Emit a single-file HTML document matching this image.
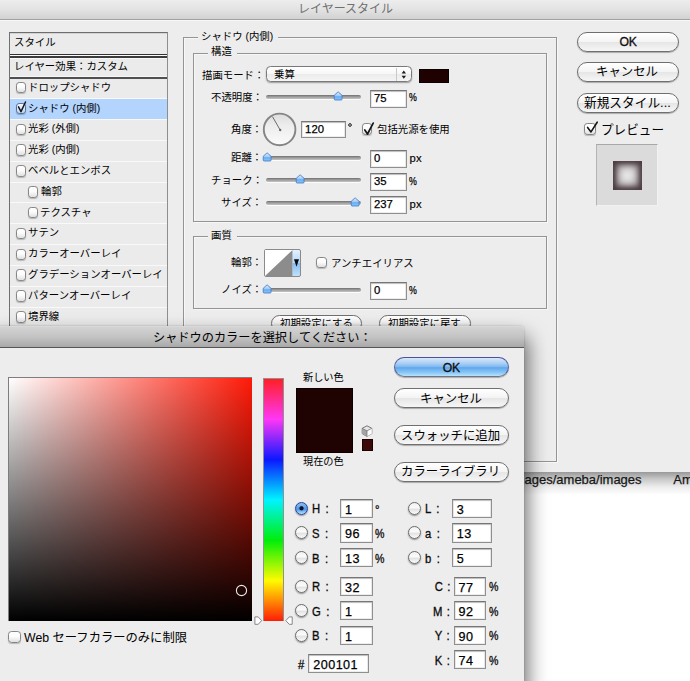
<!DOCTYPE html>
<html lang="ja">
<head>
<meta charset="utf-8">
<title>レイヤースタイル</title>
<style>
html,body{margin:0;padding:0;background:#fff}
html{overflow:hidden;width:690px;height:681px}
body{width:690px;height:681px;overflow:hidden;position:relative;font-family:"Liberation Sans",sans-serif;font-size:10.4px;color:#000;line-height:1}
.t{position:absolute;overflow:visible;pointer-events:none}
svg.t text{font-family:"Liberation Sans","Noto Sans CJK JP",sans-serif;white-space:pre}
.a{position:absolute;box-sizing:border-box}
.l{position:absolute;white-space:nowrap;line-height:1}
/* window chrome */
#ls{left:0;top:0;width:690px;height:472px;background:#ededed}
#lsbar{left:0;top:0;width:690px;height:20px;background:linear-gradient(#ededed,#e4e4e4 45%,#d2d2d2);border-bottom:1px solid #a2a2a2;box-shadow:0 1px 0 #f6f6f6}
#lsshadow{left:0;top:472px;width:690px;height:23px;background:linear-gradient(rgba(0,0,0,.40),rgba(0,0,0,.22) 30%,rgba(0,0,0,.07) 65%,rgba(0,0,0,0))}
/* list */
#list{left:9px;top:32px;width:159px;height:320px;border:1px solid #8e8e8e;border-left:1.5px solid #707070;border-top:1.6px solid #6e6e6e;background:#ebebeb;box-shadow:inset 0 1px 0 rgba(0,0,0,.1)}
.sep{position:absolute;left:10px;width:157px;height:1px;background:#f9f9f9}
.dk{position:absolute;left:10px;width:157px;height:1px;background:#555}
.sel{position:absolute;left:10px;width:157px;background:#b3d4fd}
.cb{position:absolute;box-sizing:border-box;width:9.8px;height:11.4px;margin-top:-.6px;border:1.35px solid #858585;border-radius:3.2px;background:linear-gradient(#fff,#fcfcfc 45%,#e0e0e0);box-shadow:0 1px 1px rgba(0,0,0,.22)}
.cb.on{background:linear-gradient(#f4f9ff,#d9e9fb 50%,#b6d6f7);border-color:#5a6f94}
/* group boxes */
.gb{position:absolute;box-sizing:border-box;border:1px solid #949494;box-shadow:inset 1px 1px 0 rgba(255,255,255,.55),1px 1px 0 rgba(255,255,255,.55)}
.mask{position:absolute;background:#ededed;height:3px}
/* inputs */
.in{position:absolute;box-sizing:border-box;width:37.4px;height:17.7px;line-height:15.9px;background:#fff;border:1px solid #8f8f8f;border-top-color:#767676;box-shadow:inset 0 1px 1px rgba(0,0,0,.2),inset 0 0 0 1px rgba(0,0,0,.07);font-size:11.3px;padding:0 0 0 3.3px;white-space:nowrap}
.in span{display:block;-webkit-text-stroke:.25px #000}
.in.big{font-size:12.6px;letter-spacing:.45px;padding-left:3.9px;height:19.4px;line-height:20.4px}
.pc{display:inline-block;transform:scaleX(.8);transform-origin:left;-webkit-text-stroke:.25px #000}
.lb{-webkit-text-stroke:.15px #000}
/* sliders */
.trk{position:absolute;height:4px;border-radius:2px;background:linear-gradient(#6f6f6f,#9c9c9c 45%,#c4c4c4);box-shadow:0 1px 0 rgba(255,255,255,.8)}
.th{position:absolute;width:10.3px;height:10.3px;overflow:visible;margin-left:.35px;margin-top:.9px}
/* pill buttons */
.btn{position:absolute;box-sizing:border-box;border:1px solid #6f6f6f;border-radius:10px;background:linear-gradient(#ffffff,#f4f4f4 48%,#e6e6e6 52%,#f6f6f6);box-shadow:0 1px 1px rgba(0,0,0,.28)}
.btn.blue{border-color:#4c4f9c #55629f #6f7486;background:linear-gradient(#d9e8f9,#a9cff5 30%,#82baf1 48%,#5fa7ec 54%,#8cc8f6 82%,#b8e4fc)}
.btn .l{left:0;right:0;text-align:center}
.ok{font-size:12.2px;color:#111;-webkit-text-stroke:.35px #111;letter-spacing:-.3px}
.rd{position:absolute;box-sizing:border-box;width:13.2px;height:13.2px;border-radius:7px;border:1.2px solid #6a6a6a;background:linear-gradient(#f2f2f2,#fbfbfb 45%,#e2e2e2 55%,#fafafa);box-shadow:0 1px 1.5px rgba(0,0,0,.4)}
.rd.on{border-color:#24449a;background:radial-gradient(circle at 50% 48%,#0a1530 0,#0a1530 1.6px,rgba(10,21,48,0) 2.6px),linear-gradient(#8fbdf0,#5e9fe8 45%,#4a93e6 55%,#b4e4fd)}
.lb2{font-size:12.5px;margin-top:1.1px;color:#0b0b0b;-webkit-text-stroke:.32px #0b0b0b;transform:scaleX(.9);transform-origin:left}
.lb2.r{transform-origin:right}
.ws{word-spacing:2.6px}
.pc2{display:inline-block;transform:scaleX(.94);transform-origin:left}
</style>
</head>
<body>
<!-- page behind the dialogs -->
<div class="l" style="left:510.8px;top:473px;font-size:13px;color:#1c1c1c;-webkit-text-stroke:.25px #1c1c1c">images/ameba/images</div>
<div class="l" style="left:673.3px;top:473px;font-size:13px;color:#1c1c1c;-webkit-text-stroke:.25px #1c1c1c;width:16.7px;height:16px;overflow:hidden">Ameba</div>
<div class="a" id="lsshadow"></div>

<!-- ===================== Layer Style dialog ===================== -->
<div class="a" id="ls"></div>
<div class="a" id="lsbar"></div>
<svg class="t" style="left:297.80px;top:2.42px" width="98.0" height="15.6"><text x="0" y="11.40" font-size="12" fill="#707070">レイヤースタイル</text></svg>

<!-- style list -->
<div class="a" id="list"></div>
<div class="dk" style="top:53.8px;height:1.2px;background:#333"></div>
<div class="sep" style="top:55px;height:1px;background:#fbfbfb"></div>
<div class="dk" style="top:56px;height:1.6px;background:#3c3c3c"></div>
<div class="sep" style="top:57.6px;height:1px;background:#f8f8f8"></div>
<div class="sep" style="top:76.3px;height:1px;background:#f6f6f6"></div>
<div class="dk" style="top:77.3px;height:1.5px;background:#505050"></div>
<div class="sel" style="top:99px;height:20px"></div>
<div class="sep" style="top:98px"></div>
<div class="sep" style="top:119px"></div>
<div class="sep" style="top:140px"></div>
<div class="sep" style="top:161px"></div>
<div class="sep" style="top:182px"></div>
<div class="sep" style="top:202px"></div>
<div class="sep" style="top:223px"></div>
<div class="sep" style="top:244px"></div>
<div class="sep" style="top:265px"></div>
<div class="sep" style="top:286px"></div>
<div class="sep" style="top:307px"></div>
<svg class="t" style="left:13.70px;top:36.46px" width="43.6" height="13.5"><text x="0" y="9.88" font-size="10.4" fill="#000">スタイル</text></svg>
<svg class="t" style="left:13.70px;top:60.06px" width="115.4" height="13.5"><text x="0" y="9.88" font-size="10.4" fill="#000">レイヤー効果：カスタム</text></svg>
<div class="cb" style="left:15.8px;top:82.5px"></div>
<svg class="t" style="left:27.70px;top:80.86px" width="85.2" height="13.5"><text x="0" y="9.88" font-size="10.4" fill="#000">ドロップシャドウ</text></svg>
<div class="cb on" style="left:15.8px;top:103.2px"></div>
<svg class="t" style="left:16px;top:98px" width="14" height="18"><path d="M2.5 8.9 L5 13.6 L9.5 4" fill="none" stroke="#151515" stroke-width="1.5" stroke-linecap="round" stroke-linejoin="round"/></svg>
<svg class="t" style="left:27.70px;top:101.86px" width="74.4" height="13.5"><text x="0" y="9.88" font-size="10.4" fill="#000">シャドウ (内側)</text></svg>
<div class="cb" style="left:15.8px;top:124.5px"></div>
<svg class="t" style="left:27.70px;top:122.46px" width="53.6" height="13.5"><text x="0" y="9.88" font-size="10.4" fill="#000">光彩 (外側)</text></svg>
<div class="cb" style="left:15.8px;top:145px"></div>
<svg class="t" style="left:27.70px;top:143.26px" width="53.6" height="13.5"><text x="0" y="9.88" font-size="10.4" fill="#000">光彩 (内側)</text></svg>
<div class="cb" style="left:15.8px;top:166px"></div>
<svg class="t" style="left:27.70px;top:164.06px" width="85.2" height="13.5"><text x="0" y="9.88" font-size="10.4" fill="#000">ベベルとエンボス</text></svg>
<div class="cb" style="left:27.8px;top:187px"></div>
<svg class="t" style="left:40.60px;top:184.86px" width="22.8" height="13.5"><text x="0" y="9.88" font-size="10.4" fill="#000">輪郭</text></svg>
<div class="cb" style="left:27.8px;top:207.5px"></div>
<svg class="t" style="left:39.80px;top:205.66px" width="54.0" height="13.5"><text x="0" y="9.88" font-size="10.4" fill="#000">テクスチャ</text></svg>
<div class="cb" style="left:15.8px;top:228.5px"></div>
<svg class="t" style="left:27.70px;top:226.46px" width="33.2" height="13.5"><text x="0" y="9.88" font-size="10.4" fill="#000">サテン</text></svg>
<div class="cb" style="left:15.8px;top:249.5px"></div>
<svg class="t" style="left:27.70px;top:247.26px" width="95.6" height="13.5"><text x="0" y="9.88" font-size="10.4" fill="#000">カラーオーバーレイ</text></svg>
<div class="cb" style="left:15.8px;top:270px"></div>
<svg class="t" style="left:27.70px;top:268.06px" width="137.2" height="13.5"><text x="0" y="9.88" font-size="10.4" fill="#000">グラデーションオーバーレイ</text></svg>
<div class="cb" style="left:15.8px;top:291px"></div>
<svg class="t" style="left:27.70px;top:288.86px" width="106.0" height="13.5"><text x="0" y="9.88" font-size="10.4" fill="#000">パターンオーバーレイ</text></svg>
<div class="cb" style="left:15.8px;top:312px"></div>
<svg class="t" style="left:27.70px;top:309.86px" width="33.2" height="13.5"><text x="0" y="9.88" font-size="10.4" fill="#000">境界線</text></svg>

<!-- group boxes -->
<div class="gb" style="left:183.2px;top:36.8px;width:373.8px;height:425.2px"></div>
<div class="mask" style="left:198px;top:36px;width:80px"></div>
<svg class="t" style="left:201.00px;top:29.76px" width="74.4" height="13.5"><text x="0" y="9.88" font-size="10.4" fill="#000">シャドウ (内側)</text></svg>
<div class="gb" style="left:192.8px;top:52.8px;width:354.2px;height:169.7px"></div>
<div class="mask" style="left:207.5px;top:51.8px;width:29px"></div>
<svg class="t" style="left:210.80px;top:45.36px" width="22.8" height="13.5"><text x="0" y="9.88" font-size="10.4" fill="#000">構造</text></svg>
<div class="gb" style="left:193px;top:235.5px;width:354px;height:73.5px"></div>
<div class="mask" style="left:208px;top:234.5px;width:29px"></div>
<svg class="t" style="left:210.80px;top:228.66px" width="22.8" height="13.5"><text x="0" y="9.88" font-size="10.4" fill="#000">画質</text></svg>

<!-- blend mode -->
<svg class="t" style="left:201.94px;top:68.56px" width="63.4" height="13.5"><text x="0" y="9.88" font-size="10.4" fill="#000">描画モード：</text></svg>
<div class="a" style="left:266.3px;top:66.3px;width:146px;height:16.2px;border:1px solid #7a7a7a;border-radius:4.5px;background:linear-gradient(#ffffff,#f7f7f7 48%,#ebebeb 52%,#f5f5f5);box-shadow:0 1px 1.5px rgba(0,0,0,.35)"></div>
<div class="a" style="left:396.3px;top:67.8px;width:1px;height:13.2px;background:#c9c9c9"></div>
<svg class="t" style="left:399.2px;top:68px" width="10" height="13"><path d="M2.6 5.4 L4.8 2.4 L7 5.4Z M2.6 7.8 L4.8 10.8 L7 7.8Z" fill="#1a1a1a"/></svg>
<svg class="t" style="left:274.00px;top:68.26px" width="22.8" height="13.5"><text x="0" y="9.88" font-size="10.4" fill="#000">乗算</text></svg>
<div class="a" style="left:419.2px;top:68.5px;width:29.4px;height:14px;background:#200101;border:1px solid #0a0000"></div>

<!-- opacity -->
<svg class="t" style="left:210.54px;top:91.26px" width="53.0" height="13.5"><text x="0" y="9.88" font-size="10.4" fill="#000">不透明度：</text></svg>
<div class="trk" style="left:266.3px;top:94.9px;width:95px"></div>
<svg class="th" style="left:332.3px;top:90.1px" viewBox="0 0 11 11"><use href="#thumb"/></svg>
<div class="in" style="left:369.7px;top:89.9px"><span>75</span></div>
<div class="l" style="left:408.8px;top:92.4px;font-size:11px"><span class="pc">%</span></div>

<!-- angle -->
<svg class="t" style="left:231.34px;top:122.56px" width="32.2" height="13.5"><text x="0" y="9.88" font-size="10.4" fill="#000">角度：</text></svg>
<svg class="t" style="left:261px;top:110.6px" width="38" height="38"><defs><linearGradient id="dg" x1="0" y1="0" x2="0" y2="1"><stop offset="0" stop-color="#dcdcdc"/><stop offset=".35" stop-color="#ececec"/><stop offset="1" stop-color="#fbfbfb"/></linearGradient></defs><circle cx="18.6" cy="18.4" r="15.8" fill="url(#dg)" stroke="#858585" stroke-width="1.9"/><path d="M19.2 19 L11.5 5.7" stroke="#4a4a4a" stroke-width=".8" fill="none"/><circle cx="19.2" cy="19" r="1.2" fill="#6a6a6a"/></svg>
<div class="in" style="left:300.8px;top:120.6px;width:45.4px"><span>120</span></div>
<svg class="t" style="left:346.8px;top:121.8px" width="6" height="6"><circle cx="3" cy="3" r="1.35" fill="none" stroke="#1a1a1a" stroke-width="1"/></svg>
<div class="cb" style="left:361.6px;top:123.5px;width:10px;height:11.6px"></div>
<svg class="t" style="left:361px;top:117.5px" width="15" height="18"><path d="M3.8 12 L6.5 16 L12.2 5.1" fill="none" stroke="#151515" stroke-width="1.7" stroke-linecap="round" stroke-linejoin="round"/></svg>
<svg class="t" style="left:376.80px;top:122.86px" width="74.8" height="13.5"><text x="0" y="9.88" font-size="10.4" fill="#000">包括光源を使用</text></svg>

<!-- distance -->
<svg class="t" style="left:231.34px;top:151.36px" width="32.2" height="13.5"><text x="0" y="9.88" font-size="10.4" fill="#000">距離：</text></svg>
<div class="trk" style="left:266.3px;top:155.6px;width:95px"></div>
<svg class="th" style="left:261.7px;top:150.8px" viewBox="0 0 11 11"><use href="#thumb"/></svg>
<div class="in" style="left:369.7px;top:150.4px"><span>0</span></div>
<div class="l lb" style="left:409.6px;top:153.2px;font-size:11.3px">px</div>

<!-- choke -->
<svg class="t" style="left:210.54px;top:174.16px" width="53.0" height="13.5"><text x="0" y="9.88" font-size="10.4" fill="#000">チョーク：</text></svg>
<div class="trk" style="left:266.3px;top:178.1px;width:95px"></div>
<svg class="th" style="left:294.4px;top:173.3px" viewBox="0 0 11 11"><use href="#thumb"/></svg>
<div class="in" style="left:369.7px;top:173.3px"><span>35</span></div>
<div class="l" style="left:408.8px;top:175.7px;font-size:11px"><span class="pc">%</span></div>

<!-- size -->
<svg class="t" style="left:220.94px;top:196.36px" width="42.6" height="13.5"><text x="0" y="9.88" font-size="10.4" fill="#000">サイズ：</text></svg>
<div class="trk" style="left:266.3px;top:200.7px;width:95px"></div>
<svg class="th" style="left:349.5px;top:195.9px" viewBox="0 0 11 11"><use href="#thumb"/></svg>
<div class="in" style="left:369.7px;top:196.2px"><span>237</span></div>
<div class="l lb" style="left:409.6px;top:199px;font-size:11.3px">px</div>

<!-- quality -->
<svg class="t" style="left:231.34px;top:256.16px" width="32.2" height="13.5"><text x="0" y="9.88" font-size="10.4" fill="#000">輪郭：</text></svg>
<div class="a" style="left:264px;top:249px;width:36.8px;height:28px;border:1px solid #8a8a8a;border-radius:2px;background:linear-gradient(#e3f1ff,#b5d7f8 48%,#86bdf0 52%,#bfe2fc)"></div>
<svg class="t" style="left:265px;top:250px" width="27.5" height="26"><rect width="27.5" height="26" fill="#fff"/><path d="M0 26 L27.5 26 L27.5 0Z" fill="#8c8c8c"/></svg>
<svg class="t" style="left:293px;top:258px" width="7" height="10"><path d="M1 1.3 L6 1.3 L3.5 8.8Z" fill="#0a0a0a"/></svg>
<div class="cb" style="left:316px;top:257.8px;width:10.5px;height:10.8px"></div>
<svg class="t" style="left:330.80px;top:256.86px" width="85.2" height="13.5"><text x="0" y="9.88" font-size="10.4" fill="#000">アンチエイリアス</text></svg>

<svg class="t" style="left:220.94px;top:283.16px" width="42.6" height="13.5"><text x="0" y="9.88" font-size="10.4" fill="#000">ノイズ：</text></svg>
<div class="trk" style="left:266.3px;top:287.6px;width:95px"></div>
<svg class="th" style="left:261.7px;top:282.8px" viewBox="0 0 11 11"><use href="#thumb"/></svg>
<div class="in" style="left:369.7px;top:282.3px"><span>0</span></div>
<div class="l" style="left:408.8px;top:284.8px;font-size:11px"><span class="pc">%</span></div>

<div class="btn" style="left:271px;top:315px;width:91px;height:17px"></div>
<svg class="t" style="left:280.10px;top:317.16px" width="74.8" height="13.5"><text x="0" y="9.88" font-size="10.4" fill="#000">初期設定にする</text></svg>
<div class="btn" style="left:378.5px;top:315px;width:92px;height:17px"></div>
<svg class="t" style="left:388.10px;top:317.16px" width="74.8" height="13.5"><text x="0" y="9.88" font-size="10.4" fill="#000">初期設定に戻す</text></svg>

<!-- right column -->
<div class="btn" style="left:577px;top:31.5px;width:102px;height:20px"><div class="l ok" style="top:3.8px">OK</div></div>
<div class="btn" style="left:577px;top:62px;width:102px;height:20px"></div>
<svg class="t" style="left:595.80px;top:64.48px" width="64.0" height="16.1"><text x="0" y="11.78" font-size="12.4" fill="#000">キャンセル</text></svg>
<div class="btn" style="left:577px;top:92.5px;width:102px;height:20px"></div>
<svg class="t" style="left:583.61px;top:94.81px" width="88.8" height="16.5"><text x="0" y="12.06" font-size="12.7" fill="#000">新規スタイル...</text></svg>
<div class="cb" style="left:584.3px;top:123.8px;width:12px;height:11.8px"></div>
<svg class="t" style="left:584px;top:118px" width="16" height="18"><path d="M3.6 9.4 L7 13.9 L13.2 4.2" fill="none" stroke="#151515" stroke-width="1.6" stroke-linecap="round" stroke-linejoin="round"/></svg>
<svg class="t" style="left:600.80px;top:121.87px" width="65.0" height="16.4"><text x="0" y="11.97" font-size="12.6" fill="#000">プレビュー</text></svg>
<div class="a" style="left:596.3px;top:143.8px;width:62px;height:62px;background:#dbdbdb;border:1px solid #f2f2f2;border-top-color:#a9a9a9;border-left-color:#b4b4b4"></div>
<div class="a" style="left:612.5px;top:160.7px;width:29.5px;height:29.3px;background:#e6e5e5;box-shadow:inset 0 0 8px 4px #4b3c40,inset 0 0 4px 1.5px #4b3c40"></div>

<!-- ===================== Color Picker dialog ===================== -->
<div class="a" style="left:-6px;top:326px;width:530.3px;height:355px;border-radius:4px 4px 0 0;box-shadow:0 14px 20px 4px rgba(0,0,0,.56),0 0 2px rgba(0,0,0,.25);background:#ededed"></div>
<div class="a" style="left:-6px;top:326px;width:530.3px;height:21.8px;border-radius:4px 4px 0 0;background:linear-gradient(#d3d3d3,#c5c5c5 45%,#a9a9a9);border-bottom:1.3px solid #555;border-top:1px solid #d9d9d9"></div>
<svg class="t" style="left:153.01px;top:329.60px" width="220.4" height="15.9"><text x="0" y="11.59" font-size="12.2" fill="#000">シャドウのカラーを選択してください：</text></svg>

<!-- colour field -->
<div class="a" style="left:8px;top:377px;width:243.5px;height:244px;background:#7e7e7e"></div>
<div class="a" style="left:9px;top:378px;width:242.5px;height:243px;background:linear-gradient(rgba(0,0,0,0),#000),linear-gradient(90deg,#fff,#ff1a08)"></div>
<svg class="t" style="left:235px;top:583.9px" width="13" height="13"><circle cx="6.5" cy="6.5" r="5.1" fill="none" stroke="#e6e6e6" stroke-width="1.1"/></svg>
<!-- hue strip -->
<div class="a" style="left:263.3px;top:377.6px;width:20.3px;height:243.9px;background:#909090"></div>
<div class="a" style="left:264.3px;top:378.5px;width:18.6px;height:242.5px;background:linear-gradient(#ff2024,#ff36f6 16.67%,#0c18ff 33.33%,#00f4ff 50%,#00ee0a 66.67%,#fffb00 83.33%,#ff1c08)"></div>
<svg class="t" style="left:253.6px;top:615.5px" width="9" height="10"><path d="M.9 .9 L4.2 .9 L7.6 4.6 L4.2 8.3 L.9 8.3Z" fill="#fff" stroke="#7a7a7a" stroke-width=".9" stroke-linejoin="round"/></svg>
<svg class="t" style="left:284.6px;top:615.5px" width="9" height="10"><path d="M7.2 .9 L4.2 .9 L.8 4.6 L4.2 8.3 L7.2 8.3Z" fill="#fff" stroke="#7a7a7a" stroke-width=".9" stroke-linejoin="round"/></svg>

<!-- new / current -->
<svg class="t" style="left:303.00px;top:371.18px" width="42.8" height="13.3"><text x="0" y="9.69" font-size="10.2" fill="#000">新しい色</text></svg>
<div class="a" style="left:295.5px;top:388px;width:57.3px;height:64.8px;background:#1f0202;border:1px solid #0b0000"></div>
<svg class="t" style="left:303.00px;top:455.38px" width="42.8" height="13.3"><text x="0" y="9.69" font-size="10.2" fill="#000">現在の色</text></svg>
<svg class="t" style="left:361.3px;top:425.2px" width="12" height="12.5"><path d="M6 .8 L10.8 3.3 L10.8 8.7 L6 11.4 L1.2 8.7 L1.2 3.3Z" fill="#e6e6e6" stroke="#6a6a6a" stroke-width=".9" stroke-linejoin="round"/><path d="M1.2 3.3 L6 5.9 L6 11.4 L1.2 8.7Z" fill="#a4a4a4"/><path d="M6 5.9 L10.8 3.3 L10.8 8.7 L6 11.4Z" fill="#fbfbfb"/><path d="M1.2 3.3 L6 5.9 L10.8 3.3 M6 5.9 L6 11.4" fill="none" stroke="#6a6a6a" stroke-width=".7"/></svg>
<div class="a" style="left:361.8px;top:439.4px;width:11.6px;height:11.6px;background:#3d0808;border:1px solid #1a0000"></div>

<!-- buttons -->
<div class="btn blue" style="left:394px;top:357px;width:114.5px;height:20px"><div class="l ok" style="top:3.8px">OK</div></div>
<div class="btn" style="left:394px;top:388px;width:114.5px;height:20px"></div>
<svg class="t" style="left:420.00px;top:390.68px" width="64.0" height="16.1"><text x="0" y="11.78" font-size="12.4" fill="#000">キャンセル</text></svg>
<div class="btn" style="left:394px;top:425px;width:114.5px;height:20px"></div>
<svg class="t" style="left:401.40px;top:427.68px" width="101.2" height="16.1"><text x="0" y="11.78" font-size="12.4" fill="#000">スウォッチに追加</text></svg>
<div class="btn" style="left:394px;top:461.5px;width:114.5px;height:20px"></div>
<svg class="t" style="left:401.40px;top:464.18px" width="101.2" height="16.1"><text x="0" y="11.78" font-size="12.4" fill="#000">カラーライブラリ</text></svg>

<!-- HSB -->
<div class="rd on" style="left:294.9px;top:501.5px"></div>
<div class="l lb2 ws" style="left:311.9px;top:502.1px">H :</div>
<div class="in big" style="left:340.2px;top:498.6px;width:32.4px"><span>1</span></div>
<div class="l lb2" style="left:375.3px;top:503.0px">°</div>
<div class="rd" style="left:294.9px;top:526.2px"></div>
<div class="l lb2 ws" style="left:311.9px;top:526.8px">S :</div>
<div class="in big" style="left:340.2px;top:523.3px;width:32.4px"><span>96</span></div>
<div class="l lb2" style="left:374.6px;top:526.8px"><span class="pc2">%</span></div>
<div class="rd" style="left:294.9px;top:551.0px"></div>
<div class="l lb2 ws" style="left:311.9px;top:551.6px">B :</div>
<div class="in big" style="left:340.2px;top:548.1px;width:32.4px"><span>13</span></div>
<div class="l lb2" style="left:374.6px;top:551.6px"><span class="pc2">%</span></div>
<!-- RGB -->
<div class="rd" style="left:294.9px;top:579.5px"></div>
<div class="l lb2 ws" style="left:311.9px;top:580.1px">R :</div>
<div class="in big" style="left:340.2px;top:576.6px;width:32.4px"><span>32</span></div>
<div class="rd" style="left:294.9px;top:604.0px"></div>
<div class="l lb2 ws" style="left:311.9px;top:604.6px">G :</div>
<div class="in big" style="left:340.2px;top:601.1px;width:32.4px"><span>1</span></div>
<div class="rd" style="left:294.9px;top:628.5px"></div>
<div class="l lb2 ws" style="left:311.9px;top:629.1px">B :</div>
<div class="in big" style="left:340.2px;top:625.6px;width:32.4px"><span>1</span></div>
<div class="l lb2" style="left:297.5px;top:657.6px">#</div>
<div class="in big" style="left:308.4px;top:654.1px;width:60.2px"><span>200101</span></div>
<!-- Lab -->
<div class="rd" style="left:407.9px;top:501.5px"></div>
<div class="l lb2 ws" style="left:424.6px;top:502.1px">L :</div>
<div class="in big" style="left:451.8px;top:498.6px;width:40px"><span>3</span></div>
<div class="rd" style="left:407.9px;top:526.2px"></div>
<div class="l lb2 ws" style="left:424.6px;top:526.8px">a :</div>
<div class="in big" style="left:451.8px;top:523.3px;width:40px"><span>13</span></div>
<div class="rd" style="left:407.9px;top:551.0px"></div>
<div class="l lb2 ws" style="left:424.6px;top:551.6px">b :</div>
<div class="in big" style="left:451.8px;top:548.1px;width:40px"><span>5</span></div>
<!-- CMYK -->
<div class="l lb2 r" style="word-spacing:1.5px;right:240.0px;top:580.1px">C :</div>
<div class="in big" style="left:453.7px;top:576.6px;width:32.4px"><span>77</span></div>
<div class="l lb2" style="left:488.8px;top:580.1px"><span class="pc2">%</span></div>
<div class="l lb2 r" style="word-spacing:1.5px;right:240.0px;top:604.6px">M :</div>
<div class="in big" style="left:453.7px;top:601.1px;width:32.4px"><span>92</span></div>
<div class="l lb2" style="left:488.8px;top:604.6px"><span class="pc2">%</span></div>
<div class="l lb2 r" style="word-spacing:1.5px;right:240.0px;top:629.1px">Y :</div>
<div class="in big" style="left:453.7px;top:625.6px;width:32.4px"><span>90</span></div>
<div class="l lb2" style="left:488.8px;top:629.1px"><span class="pc2">%</span></div>
<div class="l lb2 r" style="word-spacing:1.5px;right:240.0px;top:653.6px">K :</div>
<div class="in big" style="left:453.7px;top:650.1px;width:32.4px"><span>74</span></div>
<div class="l lb2" style="left:488.8px;top:653.6px"><span class="pc2">%</span></div>

<!-- web safe -->
<div class="cb" style="left:8px;top:631.2px;width:12.5px;height:12.5px;border-radius:3.5px"></div>
<svg class="t" style="left:24.00px;top:630.24px" width="166.3" height="16.0"><text x="0" y="11.69" font-size="12.3" fill="#000">Web セーフカラーのみに制限</text></svg>

<svg width="0" height="0" style="position:absolute" aria-hidden="true"><defs>
<linearGradient id="thg" x1="0" y1="0" x2="0" y2="1"><stop offset="0" stop-color="#e2f0fd"/><stop offset=".45" stop-color="#a3ccf6"/><stop offset=".6" stop-color="#69adf1"/><stop offset="1" stop-color="#86c8fb"/></linearGradient>
<path id="thumb" d="M5.5 .9 L9.7 4.6 L9.7 8.6 Q9.7 9.6 8.7 9.6 L2.3 9.6 Q1.3 9.6 1.3 8.6 L1.3 4.6Z" fill="url(#thg)" stroke="#4478cc" stroke-width=".9" stroke-linejoin="round"/>
</defs></svg>
</body>
</html>
